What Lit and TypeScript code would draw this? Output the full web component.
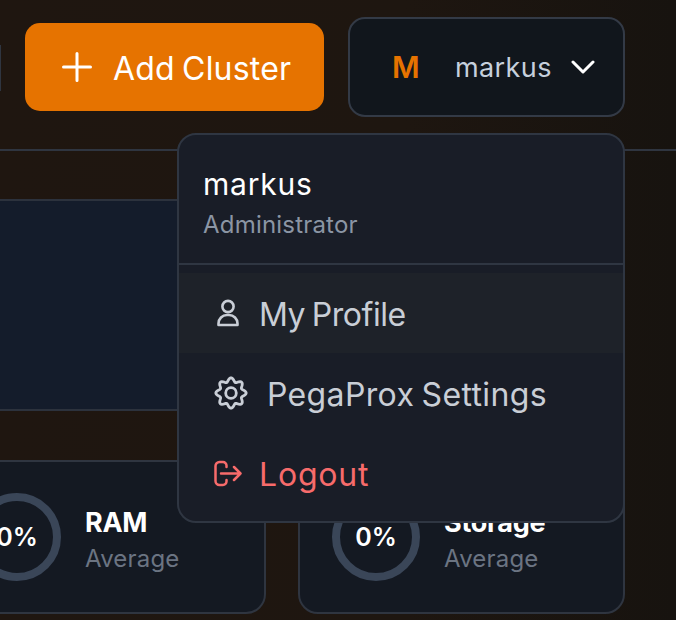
import { LitElement, html, css, svg } from "lit";
import { customElement } from "lit/decorators.js";

const gearPath = (() => {
  const pts: string[] = [];
  const n = 160;
  for (let i = 0; i < n; i++) {
    const t = (i / n) * Math.PI * 2;
    const r = 13.25 + 1.9 * Math.cos(8 * t);
    const x = 17 + r * Math.sin(t);
    const y = 17 - r * Math.cos(t);
    pts.push(`${x.toFixed(2)} ${y.toFixed(2)}`);
  }
  return `M${pts.join("L")}Z`;
})();

@customElement("app-root")
export class AppRoot extends LitElement {
  static styles = css`
    :host {
      display: block;
      position: relative;
      width: 676px;
      height: 620px;
      overflow: hidden;
      background: linear-gradient(90deg, #1f1610 0%, #1e1610 60%, #17130f 100%);
      font-family: Inter, "Noto Sans", sans-serif;
      color: #fff;
    }
    .header {
      box-sizing: border-box;
      height: 151px;
      border-bottom: 2px solid #2f3540;
      display: flex;
      align-items: flex-start;
      padding: 17px 51px 0 0;
      gap: 24px;
      justify-content: flex-end;
    }
    .stub {
      flex: none;
      width: 1px;
      height: 46px;
      margin-top: 28px;
      background: #2f3540;
    }
    .add {
      box-sizing: border-box;
      flex: none;
      width: 299px;
      height: 88px;
      margin-top: 6px;
      border-radius: 15px;
      background: #e67300;
      display: flex;
      align-items: center;
      padding-left: 36px;
      gap: 20px;
      font-size: 32px;
      font-weight: 420;
      letter-spacing: 0.2px;
      word-spacing: -2px;
    }
    .add svg { flex: none; }
    .add span { padding-top: 2px; }
    .user {
      box-sizing: border-box;
      flex: none;
      width: 277px;
      height: 100px;
      border: 2px solid #333a46;
      border-radius: 17px;
      background: #11161c;
      display: flex;
      align-items: center;
      padding-left: 42px;
    }
    .m {
      color: #e67300;
      font-size: 30px;
      font-weight: 600;
      width: 63px;
    }
    .uname {
      color: #c6d0dc;
      font-size: 27px;
      width: 116px;
      letter-spacing: 0.4px;
    }
    .main {
      display: flex;
      flex-direction: column;
      padding-top: 48px;
      margin-left: -61px;
      gap: 49px;
    }
    .hero {
      box-sizing: border-box;
      width: 400px;
      height: 212px;
      border: 2px solid #2c323d;
      background: #141c2b;
      border-radius: 4px;
    }
    .stats {
      display: grid;
      grid-template-columns: 327px 327px;
      gap: 32px;
    }
    .card {
      box-sizing: border-box;
      height: 154px;
      border: 2px solid #2f3540;
      border-radius: 20px;
      background: #141922;
      display: flex;
      align-items: center;
      padding-left: 32px;
      gap: 24px;
    }
    .ring {
      box-sizing: border-box;
      flex: none;
      width: 88px;
      height: 88px;
      border-radius: 50%;
      border: 8px solid #3a4658;
      display: flex;
      align-items: center;
      justify-content: center;
      font-size: 25px;
      font-weight: 600;
    }
    .txt {
      padding-top: 8px;
    }
    .label {
      font-size: 27px;
      font-weight: 700;
      line-height: 36px;
      letter-spacing: -0.3px;
    }
    .sub {
      font-size: 24px;
      line-height: 36px;
      color: #6b7482;
      letter-spacing: 0.2px;
    }
    .menu {
      box-sizing: border-box;
      position: absolute;
      left: 177px;
      top: 133px;
      width: 448px;
      height: 390px;
      border: 2px solid #2f3642;
      border-radius: 19px;
      background: #191d27;
      display: flex;
      flex-direction: column;
    }
    .who {
      box-sizing: border-box;
      height: 130px;
      border-bottom: 2px solid #2f3642;
      padding: 29px 0 0 24px;
    }
    .who .n {
      font-size: 30px;
      line-height: 40px;
      font-weight: 420;
      letter-spacing: 0.8px;
    }
    .who .r {
      font-size: 24px;
      line-height: 42px;
      color: #8b95a4;
      letter-spacing: 0.2px;
    }
    .items {
      padding: 8px 0;
    }
    .item {
      height: 80px;
      display: flex;
      align-items: center;
      padding-left: 35px;
      font-size: 32px;
      font-weight: 400;
      color: #c9ced6;
      word-spacing: -2px;
    }
    .item span { padding-top: 2px; }
    .item.hover {
      background: #1e2229;
      letter-spacing: -0.45px;
    }
    .item.plain {
      letter-spacing: 0.35px;
    }
    .item.danger {
      color: #f76b6b;
      letter-spacing: 0.8px;
    }
    .item svg {
      flex: none;
    }
    .i-user { margin-right: 19px; margin-left: 2px; }
    .i-gear { margin-right: 19px; }
    .i-out { margin-right: 17px; }
  `;

  render() {
    return html`
      <div class="header">
        <div class="stub"></div>
        <div class="add">
          <svg width="32" height="32" viewBox="0 0 32 32" fill="none" stroke="#fff" stroke-width="3" stroke-linecap="round"><path d="M16 2.5v27M2.5 16h27"/></svg>
          <span>Add Cluster</span>
        </div>
        <div class="user">
          <span class="m">M</span>
          <span class="uname">markus</span>
          <svg width="24" height="16" viewBox="0 0 24 16" fill="none" stroke="#fff" stroke-width="3" stroke-linecap="round" stroke-linejoin="round"><path d="M2 3l10 10L22 3"/></svg>
        </div>
      </div>
      <div class="main">
        <div class="hero"></div>
        <div class="stats">
          <div class="card">
            <div class="ring">0%</div>
            <div class="txt"><div class="label">RAM</div><div class="sub">Average</div></div>
          </div>
          <div class="card">
            <div class="ring">0%</div>
            <div class="txt"><div class="label">Storage</div><div class="sub">Average</div></div>
          </div>
        </div>
      </div>
      <div class="menu">
        <div class="who">
          <div class="n">markus</div>
          <div class="r">Administrator</div>
        </div>
        <div class="items">
          <div class="item hover">
            <svg class="i-user" width="24" height="28" viewBox="0 0 24 28" fill="none" stroke="currentColor" stroke-width="2.6" stroke-linejoin="round"><circle cx="12" cy="7.5" r="5.6"/><path d="M2.5 26v-1.5a8.5 8.5 0 0 1 8.5-8.5h2a8.5 8.5 0 0 1 8.5 8.5V26z"/></svg>
            <span>My Profile</span>
          </div>
          <div class="item plain">
            <svg class="i-gear" width="34" height="34" viewBox="0 0 34 34" fill="none" stroke="currentColor" stroke-width="2.8" stroke-linejoin="round">${svg`<path d=${gearPath}/>`}<circle cx="17" cy="17" r="5.3"/></svg>
            <span>PegaProx Settings</span>
          </div>
          <div class="item danger">
            <svg class="i-out" width="28" height="27" viewBox="0 0 28 27" fill="none" stroke="currentColor" stroke-width="2.5" stroke-linecap="round" stroke-linejoin="round"><path d="M12.5 7V5.5A3.5 3.5 0 0 0 9 2H5.5a4 4 0 0 0-4 4v15a4 4 0 0 0 4 4H9a3.5 3.5 0 0 0 3.5-3.5V20"/><path d="M7 13.5h19.5M20 7l6.5 6.5L20 20"/></svg>
            <span>Logout</span>
          </div>
        </div>
      </div>
    `;
  }
}
